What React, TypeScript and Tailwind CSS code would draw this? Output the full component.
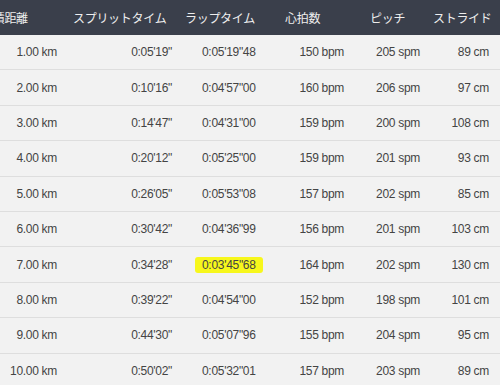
import React from 'react'

const rows = [
  ['1.00 km', "0:05'19\"", "0:05'19\"48", '150 bpm', '205 spm', '89 cm'],
  ['2.00 km', "0:10'16\"", "0:04'57\"00", '160 bpm', '206 spm', '97 cm'],
  ['3.00 km', "0:14'47\"", "0:04'31\"00", '159 bpm', '200 spm', '108 cm'],
  ['4.00 km', "0:20'12\"", "0:05'25\"00", '159 bpm', '201 spm', '93 cm'],
  ['5.00 km', "0:26'05\"", "0:05'53\"08", '157 bpm', '202 spm', '85 cm'],
  ['6.00 km', "0:30'42\"", "0:04'36\"99", '156 bpm', '201 spm', '103 cm'],
  ['7.00 km', "0:34'28\"", "0:03'45\"68", '164 bpm', '202 spm', '130 cm'],
  ['8.00 km', "0:39'22\"", "0:04'54\"00", '152 bpm', '198 spm', '101 cm'],
  ['9.00 km', "0:44'30\"", "0:05'07\"96", '155 bpm', '204 spm', '95 cm'],
  ['10.00 km', "0:50'02\"", "0:05'32\"01", '157 bpm', '203 spm', '89 cm'],
]

const App = () => {
  return (
    <div className="w-[500px] h-[385px] overflow-hidden bg-[#f2f2f2]">
      <div className="ml-[-30px] w-[530px] font-['Liberation_Sans',sans-serif]">
        {/* header */}
        <div className="flex h-[35px] items-center bg-[#3a3f4b] text-[12px] text-[#eeeeee] tracking-[-0.3px] font-['Noto_Sans_CJK_JP',sans-serif]">
          <div className="w-[95px] pl-[11px]">累積距離</div>
          <div className="w-[113px] pl-[8px]">スプリットタイム</div>
          <div className="w-[92px] pl-[7px]">ラップタイム</div>
          <div className="w-[85px] pl-[15px]">心拍数</div>
          <div className="w-[73px] pl-[15px]">ピッチ</div>
          <div className="w-[72px] pl-[5px]">ストライド</div>
        </div>
        {rows.map((r, i) => (
          <div
            key={i}
            className="flex h-[35.4px] items-center border-b border-[#dedede] text-[12px] text-[#444444] tracking-[-0.3px]"
          >
            <div className="w-[95px] pr-[8px] text-right">{r[0]}</div>
            <div className="w-[113px] pr-[6px] text-right">{r[1]}</div>
            <div className="w-[92px] pl-[24px]">
              {i === 6 ? (
                <span className="ml-[-7px] rounded-[3px] bg-[#f7f71c] px-[7px] py-[1px]">{r[2]}</span>
              ) : (
                r[2]
              )}
            </div>
            <div className="w-[85px] pr-[11px] text-right">{r[3]}</div>
            <div className="w-[73px] pr-[8px] text-right">{r[4]}</div>
            <div className="w-[72px] pr-[11px] text-right">{r[5]}</div>
          </div>
        ))}
      </div>
    </div>
  )
}

export default App
